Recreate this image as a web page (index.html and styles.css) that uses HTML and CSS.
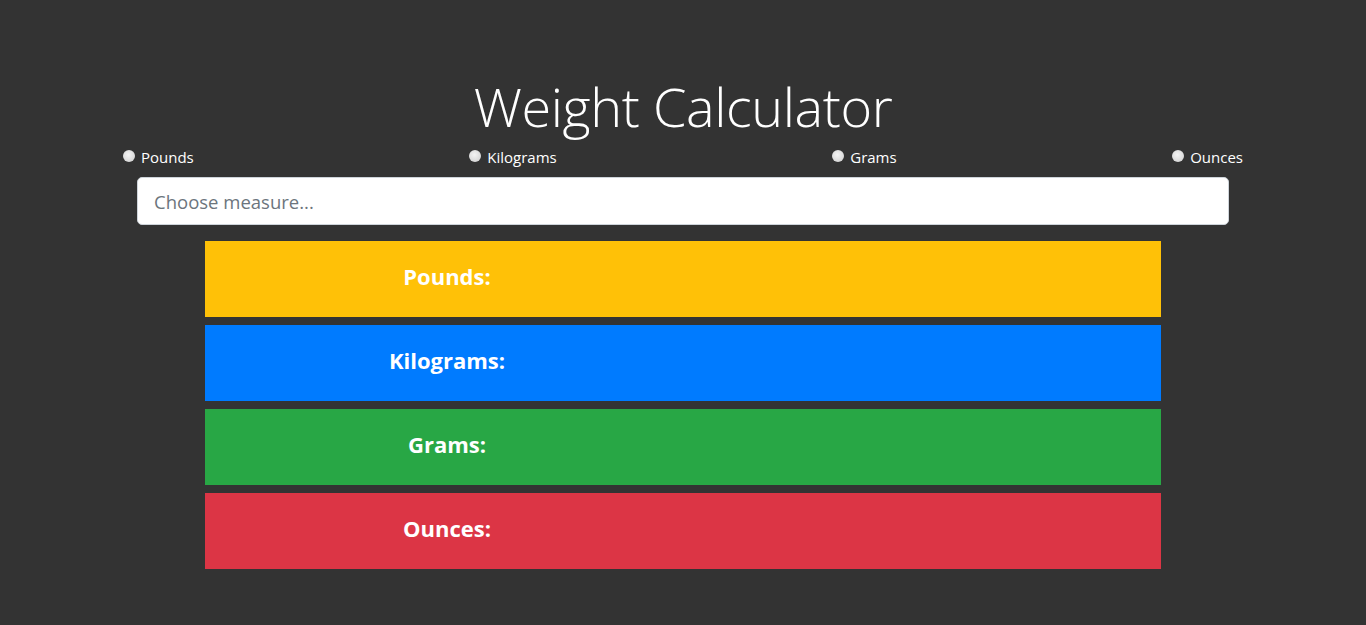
FILE: index.html
```html
<!DOCTYPE html>
<html lang="en">
<head>
<meta charset="utf-8">
<title>Weight Calculator</title>
<link rel="stylesheet" href="styles.css">
</head>
<body>
<main class="app">
  <h1 class="title">Weight Calculator</h1>
  <div class="units">
    <label class="unit"><input type="radio" name="unit"><span>Pounds</span></label>
    <label class="unit"><input type="radio" name="unit"><span>Kilograms</span></label>
    <label class="unit"><input type="radio" name="unit"><span>Grams</span></label>
    <label class="unit"><input type="radio" name="unit"><span>Ounces</span></label>
  </div>
  <input class="measure" type="text" placeholder="Choose measure...">
  <div class="results">
    <div class="result yellow"><h4 class="label">Pounds:</h4><div class="value"></div></div>
    <div class="result blue"><h4 class="label">Kilograms:</h4><div class="value"></div></div>
    <div class="result green"><h4 class="label">Grams:</h4><div class="value"></div></div>
    <div class="result red"><h4 class="label">Ounces:</h4><div class="value"></div></div>
  </div>
</main>
</body>
</html>
```

FILE: styles.css
```css
html, body {
  margin: 0;
  padding: 0;
  background: #333333;
  font-family: "Open Sans", "Noto Sans", sans-serif;
  color: #ffffff;
}

.app {
  display: flex;
  flex-direction: column;
  align-items: center;
  padding-top: 72px;
}

.title {
  margin: 0;
  font-weight: 300;
  font-size: 54px;
  line-height: 68px;
  letter-spacing: -0.4px;
}

.units {
  width: 1120px;
  display: flex;
  justify-content: space-between;
  margin-top: 7px;
}

.unit {
  display: flex;
  align-items: center;
  font-size: 15px;
  line-height: 20px;
  gap: 6px;
}

.unit input {
  appearance: none;
  -webkit-appearance: none;
  width: 12px;
  height: 12px;
  margin: 0;
  border-radius: 50%;
  background: radial-gradient(circle at 45% 40%, #f4f4f4 0%, #d8d8d8 70%, #bdbdbd 100%);
  position: relative;
  top: -1px;
}

.measure {
  box-sizing: border-box;
  width: 1092px;
  height: 48px;
  margin-top: 10px;
  padding: 0 16px;
  border: 1px solid #ced4da;
  border-radius: 5px;
  background: #fff;
  font-family: inherit;
  font-size: 18.5px;
  color: #495057;
  outline: none;
}

.measure::placeholder {
  color: #6c757d;
}

.results {
  width: 956px;
  display: flex;
  flex-direction: column;
  gap: 8px;
  margin-top: 16px;
}

.result {
  height: 76px;
  display: grid;
  grid-template-columns: 484px 1fr;
  align-items: center;
}

.label {
  margin: 0;
  text-align: center;
  font-size: 22px;
  font-weight: 700;
  color: #fff;
  position: relative;
  top: -3px;
}

.yellow { background: #ffc107; }
.blue { background: #007bff; }
.green { background: #28a745; }
.red { background: #dc3545; }
```
